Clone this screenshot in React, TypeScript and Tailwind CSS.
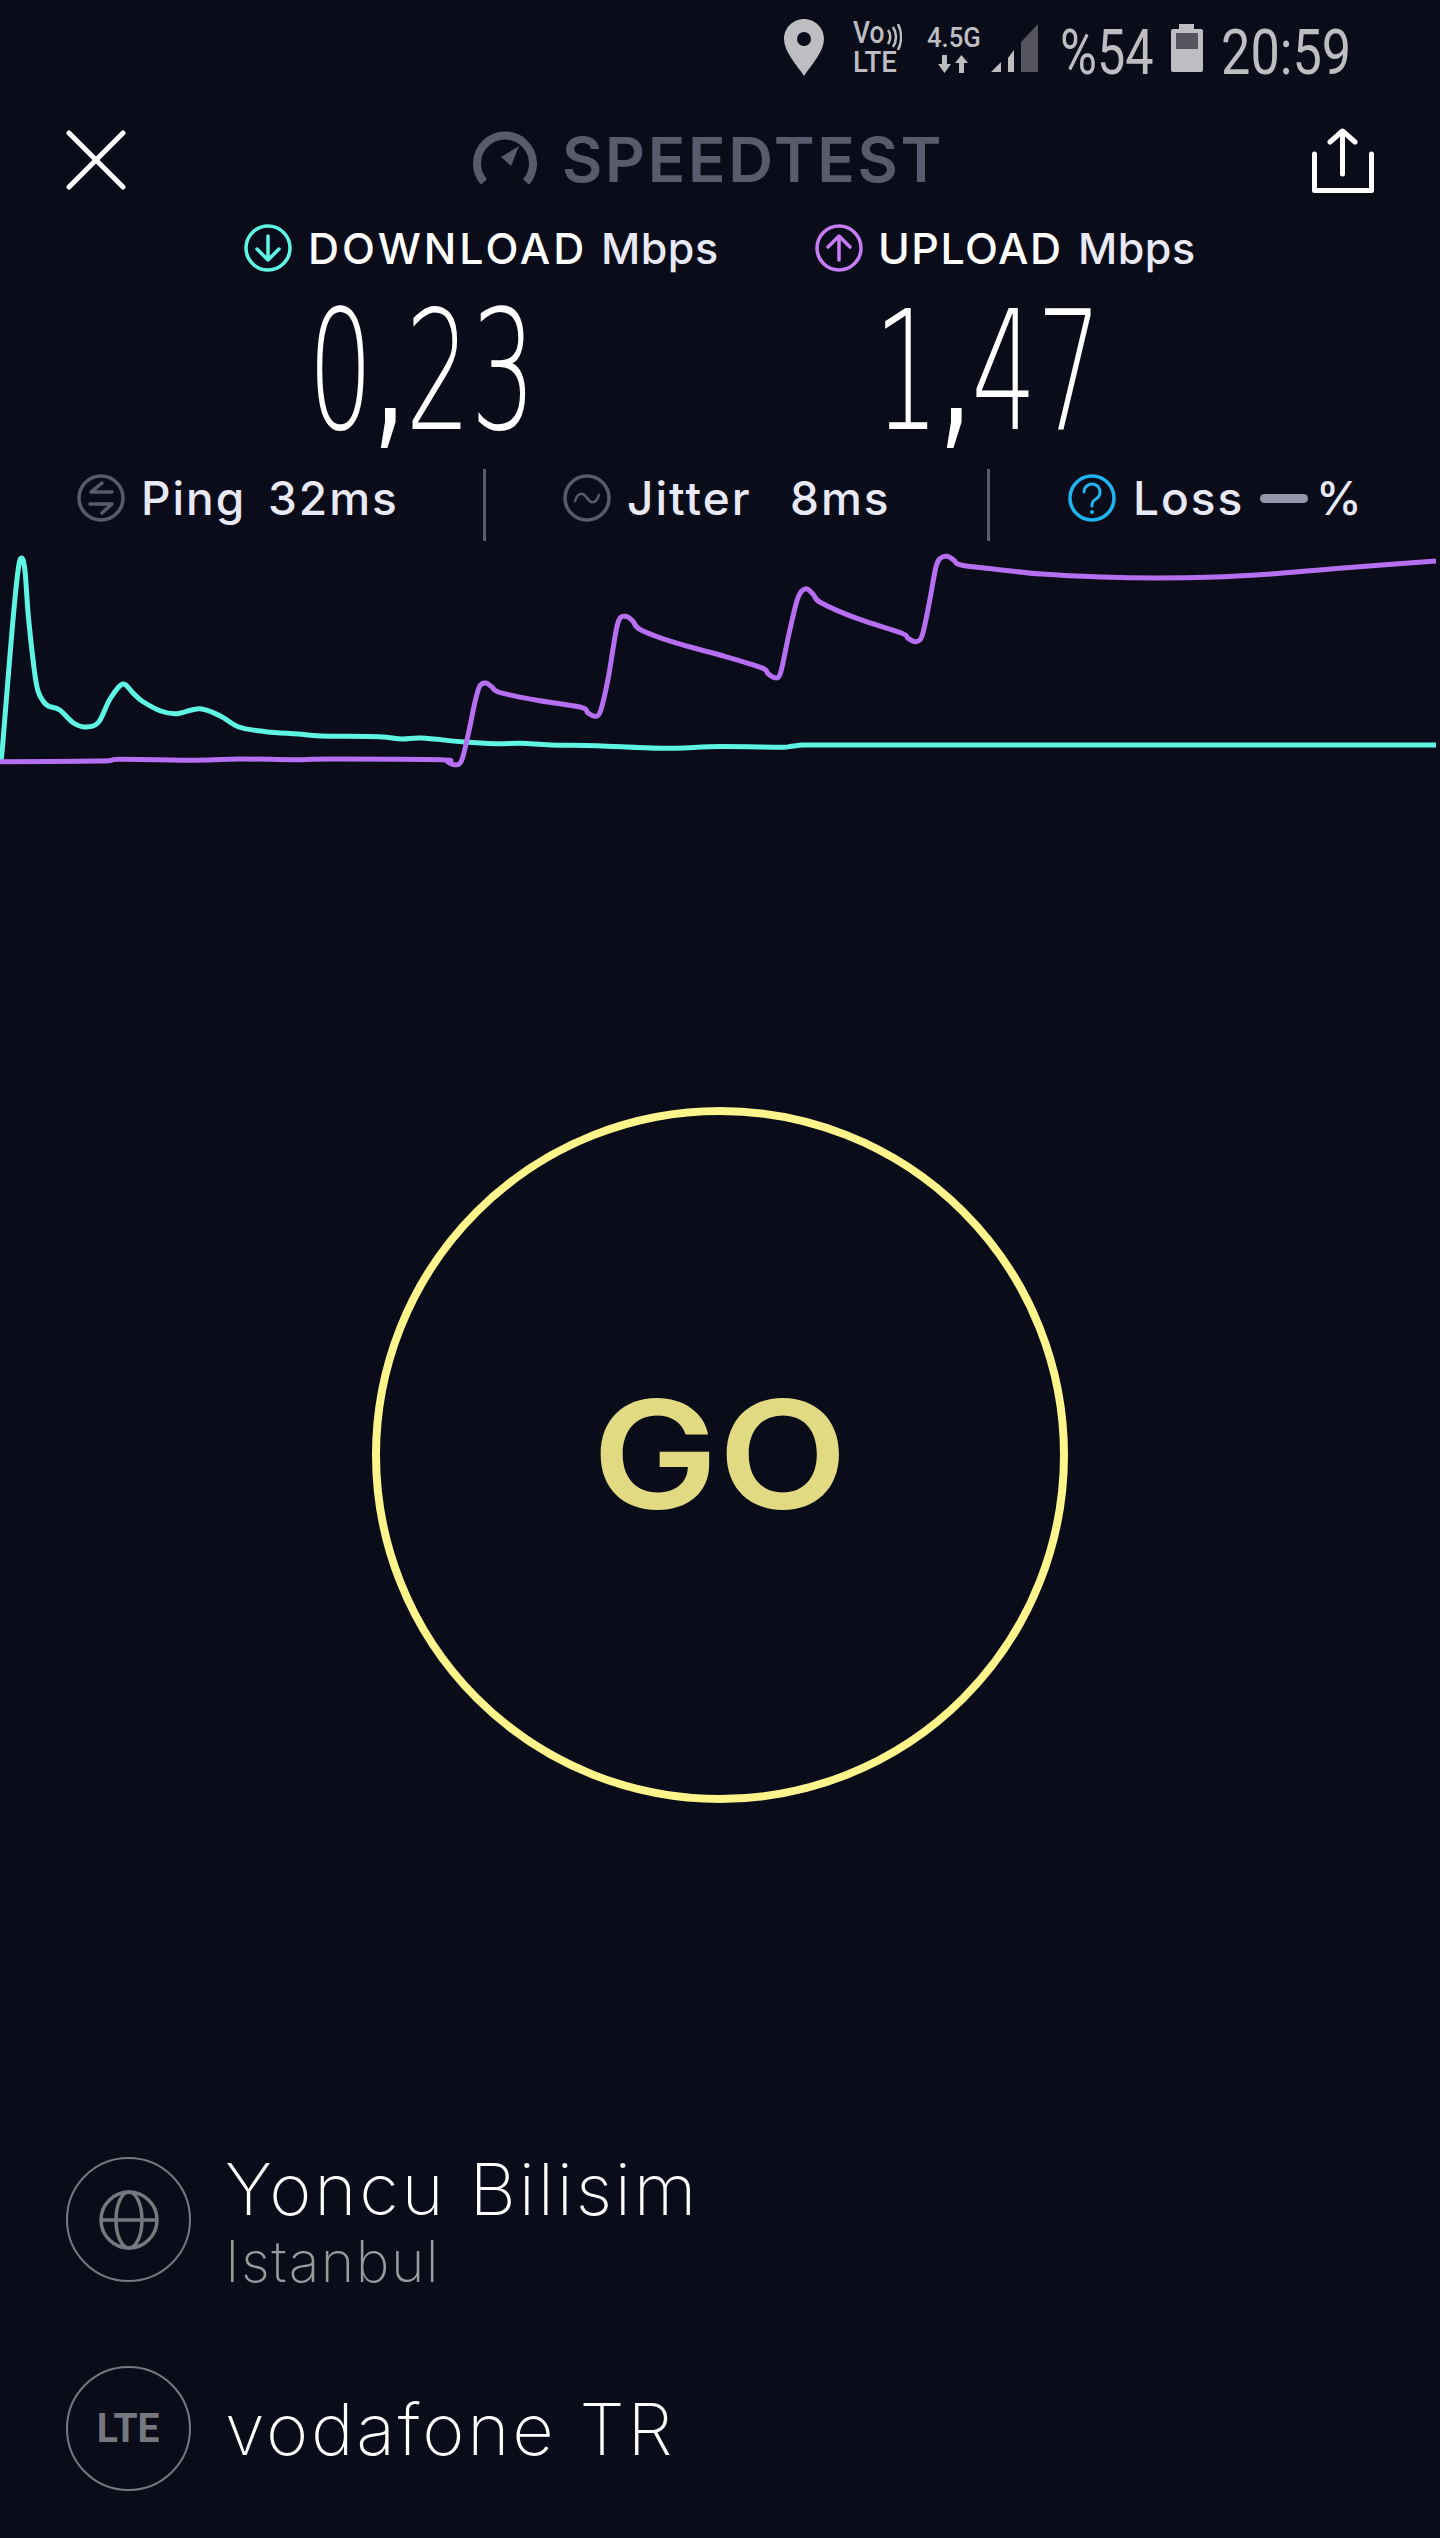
const cyanPoints: [number, number][] = [
  [1, 760], [3, 740], [12, 630], [18, 570], [21.6, 557], [25, 570], [28.5, 617], [34.4, 670], [38, 690], [43, 700], [48.2, 705], [59.7, 709],
  [73.5, 722], [86.3, 726], [98.7, 721], [110, 698], [122.6, 683], [133, 692], [142, 700], [160.7, 710],
  [176.8, 712.7], [199.7, 707.7], [220.4, 715], [238.8, 726], [266, 730.7], [298, 733], [321, 735], [379, 735.7],
  [401.7, 738], [422, 737], [463.7, 741], [496, 742.7], [521, 742.3], [551, 744], [597, 744.7], [661, 747.3],
  [720, 745.5], [779.7, 746.3], [790, 745.5], [802.6, 744], [820, 744], [860, 744], [1000, 744], [1200, 744], [1436, 744],
];

const purplePoints: [number, number][] = [
  [0, 760.7], [101, 760], [120, 758.3], [197, 759.3], [239, 758], [294, 758.7], [331, 758], [440.8, 758.7],
  [447.7, 761], [454.5, 763.7], [461.4, 760], [468.3, 733], [475.2, 700], [479.8, 685], [485.8, 682], [492, 686],
  [499.5, 691.3], [537, 699.3], [580.8, 706.3], [587.7, 711.7], [595, 715.3], [600.5, 710], [608.3, 676.7],
  [617.5, 623.3], [625.3, 615.3], [632.7, 620], [640.5, 628.7], [675, 641.7], [720, 654], [761.3, 666.7],
  [768, 672.7], [775, 676.7], [780.6, 671.7], [788.9, 633.3], [798, 596.7], [805.9, 587.7], [813.2, 593.3],
  [821, 601.7], [857.7, 617.7], [901.4, 632], [908, 637.3], [915.6, 640.7], [922, 635], [929, 603.3],
  [935.8, 566.7], [940.4, 557.3], [947.3, 555.3], [954, 559.3], [961, 564], [995.5, 568.3], [1041.4, 573],
  [1101, 576], [1156, 577], [1216, 576], [1271, 573], [1340, 567.3], [1436, 560],
];

// catmull-rom through the sampled points
const smoothPath = (pts: [number, number][]) => {
  let d = `M${pts[0][0]} ${pts[0][1]}`;
  for (let i = 0; i < pts.length - 1; i++) {
    const p0 = pts[i - 1] ?? pts[i];
    const p1 = pts[i];
    const p2 = pts[i + 1];
    const p3 = pts[i + 2] ?? p2;
    const c1x = p1[0] + (p2[0] - p0[0]) / 6;
    const c1y = p1[1] + (p2[1] - p0[1]) / 6;
    const c2x = p2[0] - (p3[0] - p1[0]) / 6;
    const c2y = p2[1] - (p3[1] - p1[1]) / 6;
    d += ` C${c1x} ${c1y} ${c2x} ${c2y} ${p2[0]} ${p2[1]}`;
  }
  return d;
};

const StatusBar = () => (
  <div className="h-[120px] pt-[19px] pl-[784px] flex items-start text-[#bdbdc2] font-['Roboto',sans-serif]">
    <svg width="40" height="57" viewBox="0 0 40 57" className="shrink-0">
      <path
        fillRule="evenodd"
        fill="#bdbdc2"
        d="M20 0C9 0 0 9 0 20C0 33 13 46 20 57C27 46 40 33 40 20C40 9 31 0 20 0ZM20 13A7 7 0 1 1 20 27A7 7 0 1 1 20 13Z"
      />
    </svg>
    <div className="relative shrink-0 ml-[29px] w-[48px] h-[57px]">
      <span className="absolute left-0 top-0 text-[31px] leading-[28px] font-medium origin-left scale-x-[0.85]">Vo</span>
      <svg width="16" height="26" viewBox="0 0 16 26" className="absolute left-[33px] top-[5px]">
        <path d="M2 6C5 10 5 16 2 20M7 3C11 9 11 17 7 23M12 0C16 8 16 18 12 26" fill="none" stroke="#bdbdc2" strokeWidth="2.500" />
      </svg>
      <span className="absolute left-0 top-[29px] text-[29px] leading-[28px] font-medium origin-left scale-x-[0.95]">LTE</span>
    </div>
    <div className="relative shrink-0 ml-[26px] w-[52px] h-[57px]">
      <span className="absolute left-0 top-[6px] text-[27px] leading-[26px] font-medium origin-left scale-x-[0.95]">4.5G</span>
      <svg width="30" height="18" viewBox="0 0 30 18" className="absolute left-[11px] top-[36px]">
        <path d="M4 0H9V9H13L6.5 18L0 9H4Z M21 18H26V8H30L23.500 0L17 8H21Z" fill="#bdbdc2" />
      </svg>
    </div>
    <svg width="47" height="48" viewBox="0 0 47 48" className="shrink-0 ml-[12px] mt-[5px]">
      <path d="M0 48L10 38V48Z M17 48V34L23 26V48Z" fill="#bdbdc2" />
      <path d="M30 48V18L47 0V48Z" fill="#55555f" />
    </svg>
    <span className="shrink-0 w-[111px] ml-[22px] -mt-[3px] text-[63px] leading-[74px] font-normal origin-left scale-x-[0.8] whitespace-nowrap">%54</span>
    <svg width="32" height="48" viewBox="0 0 32 48" className="shrink-0 mt-[5px]">
      <path d="M8 0H23V5H30A2 2 0 0 1 32 7V46A2 2 0 0 1 30 48H2A2 2 0 0 1 0 46V7A2 2 0 0 1 2 5H8Z" fill="#bdbdc2" />
      <rect x="5" y="9" width="22" height="16" fill="#55555f" />
    </svg>
    <span className="shrink-0 ml-[18px] -mt-[3px] text-[63px] leading-[74px] font-normal origin-left scale-x-[0.83] whitespace-nowrap">20:59</span>
  </div>
);

const Header = () => (
  <div className="relative h-[80px] flex items-start">
    <svg width="60" height="60" viewBox="0 0 60 60" className="ml-[66px] mt-[10px] shrink-0">
      <path d="M3 3L57 57M57 3L3 57" stroke="#fff" strokeWidth="5" strokeLinecap="round" />
    </svg>
    <svg width="64" height="56" viewBox="0 0 64 56" className="ml-[347px] mt-[8px] shrink-0">
      <path d="M11 54A28 28 0 1 1 53 54" fill="none" stroke="#595b6d" strokeWidth="8" />
      <path d="M46 18L38 38L28 29Z" fill="#595b6d" />
    </svg>
    <span className="ml-[25px] mt-[5px] text-[62px] leading-[70px] font-semibold tracking-[2.7px] text-[#595b6d] whitespace-nowrap">SPEEDTEST</span>
    <svg width="62" height="65" viewBox="0 0 62 65" className="absolute left-[1312px] top-[8px]">
      <path d="M2.500 26V62.500H59.500V26" fill="none" stroke="#fff" strokeWidth="5" strokeLinejoin="round" strokeLinecap="round" />
      <path d="M30.500 46V3M18 14L30.500 3L43 14" fill="none" stroke="#fff" strokeWidth="5" strokeLinecap="round" strokeLinejoin="round" />
    </svg>
  </div>
);

const SpeedLabels = () => (
  <div className="mt-[24px] h-[48px] flex items-center whitespace-nowrap text-[43px] font-medium leading-[48px]">
    <svg width="50" height="48" viewBox="0 0 50 48" className="ml-[243px] shrink-0">
      <circle cx="25" cy="24" r="22" fill="none" stroke="#5ff5e5" strokeWidth="3.500" />
      <path d="M25 12V35M14 25L25 36L36 25" fill="none" stroke="#5ff5e5" strokeWidth="3.500" strokeLinecap="round" strokeLinejoin="round" />
    </svg>
    <span className="ml-[15px] w-[293px] text-white tracking-[3px]">DOWNLOAD</span>
    <span className="w-[213px] text-[#e9e9f6] tracking-[0.5px]">Mbps</span>
    <svg width="50" height="48" viewBox="0 0 50 48" className="shrink-0">
      <circle cx="25" cy="24" r="22" fill="none" stroke="#c77bf5" strokeWidth="3.500" />
      <path d="M25 36V13M14 23L25 12L36 23" fill="none" stroke="#c77bf5" strokeWidth="3.500" strokeLinecap="round" strokeLinejoin="round" />
    </svg>
    <span className="ml-[14px] w-[200px] text-white tracking-[1.5px]">UPLOAD</span>
    <span className="text-[#e9e9f6] tracking-[0.5px]">Mbps</span>
  </div>
);

const SpeedValues = () => (
  <div className="mt-[32px] h-[137px] flex whitespace-nowrap text-white font-['DejaVu_Sans',sans-serif] font-extralight text-[165px] leading-[137px]">
    <span className="ml-[308px] w-[566px] origin-left scale-x-[0.62]">
      0<span className="font-normal">,</span>23
    </span>
    <span className="origin-left scale-x-[0.62]">
      1<span className="font-normal">,</span>47
    </span>
  </div>
);

const Stats = () => (
  <div className="mt-[28px] h-[72px] flex items-start whitespace-nowrap text-[46px] leading-[56px] font-medium text-[#e9e9f6] tracking-[2px]">
    <div className="w-[483px] h-[58px] pl-[77px] flex items-center">
      <svg width="48" height="48" viewBox="0 0 48 48" className="shrink-0">
        <circle cx="24" cy="24" r="22" fill="none" stroke="#595b6d" strokeWidth="3.500" />
        <path d="M25 9L14 18H35M13 30H35L25 39" fill="none" stroke="#595b6d" strokeWidth="3.500" strokeLinecap="round" strokeLinejoin="round" />
      </svg>
      <span className="ml-[16px] w-[127px]">Ping</span>
      <span>32ms</span>
    </div>
    <div className="w-[3px] h-[72px] bg-[#595b6d] shrink-0" />
    <div className="w-[501px] h-[58px] pl-[77px] flex items-center">
      <svg width="48" height="48" viewBox="0 0 48 48" className="shrink-0">
        <circle cx="24" cy="24" r="22" fill="none" stroke="#595b6d" strokeWidth="3.500" />
        <path d="M12 27C15 18 20 18 24 24C28 30 33 30 36 21" fill="none" stroke="#595b6d" strokeWidth="2.500" strokeLinecap="round" />
      </svg>
      <span className="ml-[16px] w-[163px]">Jitter</span>
      <span>8ms</span>
    </div>
    <div className="w-[3px] h-[72px] bg-[#595b6d] shrink-0" />
    <div className="h-[58px] pl-[78px] flex items-center">
      <svg width="48" height="48" viewBox="0 0 48 48" className="shrink-0">
        <circle cx="24" cy="24" r="22" fill="none" stroke="#1fb4f2" strokeWidth="3.500" />
        <path d="M16 18A8 8 0 1 1 28 25C25 27 24 28 24 32" fill="none" stroke="#1fb4f2" strokeWidth="3" strokeLinecap="round" />
        <circle cx="24" cy="38" r="2" fill="#1fb4f2" />
      </svg>
      <span className="ml-[17px] w-[127px]">Loss</span>
      <div className="w-[48px] h-[9px] rounded-full bg-[#9495a8] shrink-0" />
      <span className="ml-[8px] tracking-normal">%</span>
    </div>
  </div>
);

const Graph = () => (
  <svg width="1440" height="240" viewBox="0 540 1440 240" className="block">
    <path d={smoothPath(cyanPoints)} fill="none" stroke="#5ff5e5" strokeWidth="5" strokeLinejoin="round" />
    <path d={smoothPath(purplePoints)} fill="none" stroke="#b76ff2" strokeWidth="5" strokeLinejoin="round" />
  </svg>
);

const GoButton = () => (
  <div className="mt-[326px] mx-auto w-[696px] h-[696px] rounded-full border-[8px] border-[#fdf48c] flex items-center justify-center">
    <span className="text-[150px] leading-none font-semibold text-[#e1da82] scale-x-[1.12]">GO</span>
  </div>
);

const InfoRow = ({ icon, title, sub, className }: { icon: React.ReactNode; title: string; sub?: string; className: string }) => (
  <div className={`${className} ml-[66px] flex ${sub ? "items-start" : "items-center"}`}>
    <div className="w-[125px] h-[125px] rounded-full border-2 border-[#77787f] flex items-center justify-center shrink-0">
      {icon}
    </div>
    <div className={`ml-[34px] font-extralight whitespace-nowrap ${sub ? "-mt-[11px]" : ""}`}>
      <div className="text-[72px] leading-[86px] text-white tracking-[2.800px]">{title}</div>
      {sub && <div className="text-[57px] leading-[60px] text-[#9a9aa0] tracking-[1.500px]">{sub}</div>}
    </div>
  </div>
);

export default function App() {
  return (
    <div className="w-[1440px] h-[2538px] overflow-hidden bg-[#0a0c1a] font-['Inter',sans-serif]">
      <StatusBar />
      <Header />
      <SpeedLabels />
      <SpeedValues />
      <Stats />
      <Graph />
      <GoButton />
      <InfoRow
        className="mt-[354px]"
        title="Yoncu Bilisim"
        sub="Istanbul"
        icon={
          <svg width="60" height="60" viewBox="0 0 60 60">
            <circle cx="30" cy="30" r="28" fill="none" stroke="#77787f" strokeWidth="3.500" />
            <ellipse cx="30" cy="30" rx="13" ry="28" fill="none" stroke="#77787f" strokeWidth="3.500" />
            <path d="M2 30H58" stroke="#77787f" strokeWidth="3.500" />
          </svg>
        }
      />
      <InfoRow
        className="mt-[74px]"
        title="vodafone TR"
        icon={<span className="font-['Roboto',sans-serif] font-bold text-[41px] leading-none text-[#77787f] scale-x-[0.95]">LTE</span>}
      />
    </div>
  );
}
